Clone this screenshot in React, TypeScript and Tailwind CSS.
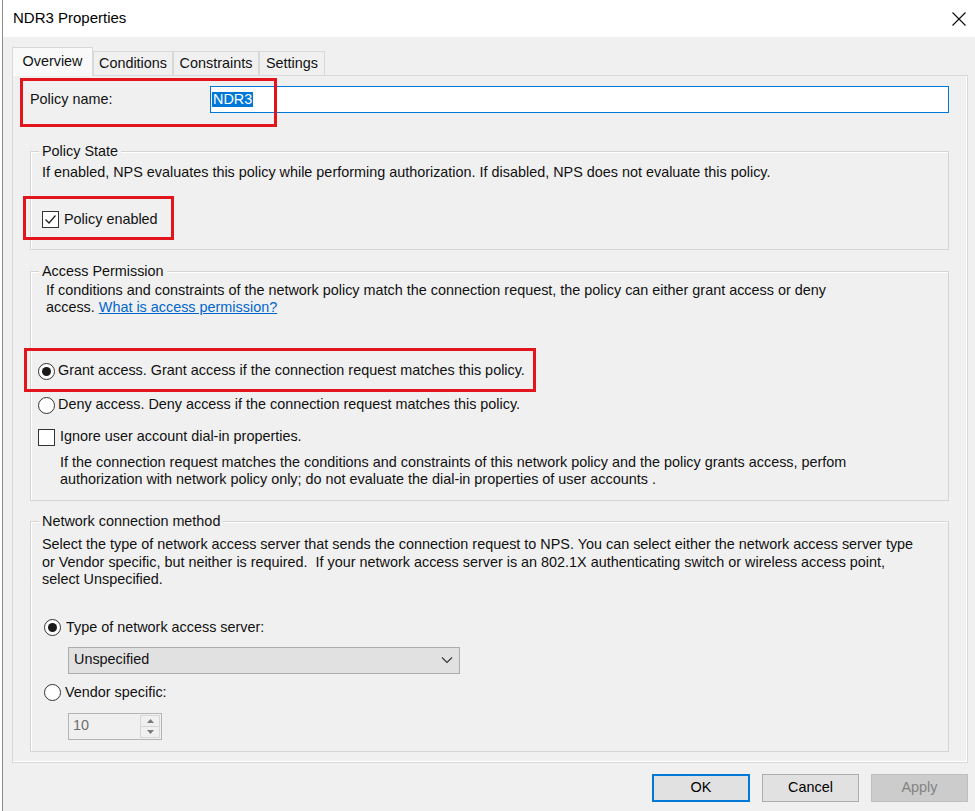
import { FC, ReactNode } from "react";

const font = { fontFamily: '"Liberation Sans", Arial, sans-serif' };

const Radio: FC<{ checked?: boolean }> = ({ checked }) => (
  <span className="w-[17px] h-[17px] shrink-0 rounded-full border border-[#333333] bg-white flex items-center justify-center">
    {checked && <span className="w-[9px] h-[9px] rounded-full bg-[#1a1a1a]" />}
  </span>
);

const Check: FC<{ checked?: boolean }> = ({ checked }) => (
  <span className="w-[17px] h-[17px] shrink-0 border border-[#333333] bg-white flex items-center justify-center">
    {checked && (
      <svg width="13" height="13" viewBox="0 0 13 13">
        <path d="M1.5 6.5 L5 10 L11.5 2.5" fill="none" stroke="#222" strokeWidth="1.3" />
      </svg>
    )}
  </span>
);

// group box: title sits on the top border, text starts at x 42
const Group: FC<{ title: string; className: string; children: ReactNode }> = ({ title, className, children }) => (
  <div className={"border border-[#d5d5d5] shadow-[inset_1px_1px_0_#ffffff] flex flex-col " + className}>
    <div className="-mt-[9px] ml-[8px] px-[3px] h-[17px] leading-[17px] w-fit bg-[#f0f0f0]">{title}</div>
    {children}
  </div>
);

const Tab: FC<{ label: string; active?: boolean; w: string }> = ({ label, active, w }) => (
  <div
    className={
      "flex items-center justify-center border border-b-0 border-[#d9d9d9] " +
      w +
      (active ? " h-[29px] -mb-px relative z-10 bg-[#f9f9f9]" : " h-[24px] bg-[#f0f0f0]")
    }
  >
    {label}
  </div>
);

const Button: FC<{ label: string; primary?: boolean; disabled?: boolean }> = ({ label, primary, disabled }) => (
  <div
    className={
      "h-[28px] flex items-center justify-center " +
      (primary
        ? "w-[98px] border-2 border-[#0078d7] bg-[#e1e1e1] text-black"
        : disabled
        ? "w-[97px] border border-[#bfbfbf] bg-[#cccccc] text-[#838383]"
        : "w-[97px] border border-[#adadad] bg-[#e1e1e1] text-black")
    }
  >
    {label}
  </div>
);

export default function App() {
  return (
    <div className="relative w-[975px] h-[811px] bg-white overflow-hidden text-[14.4px] text-[#111]" style={font}>
      <div className="ml-[2px] h-full border-l border-[#8c8c8c] flex flex-col bg-[#f0f0f0]">
        {/* title bar */}
        <div className="h-[37px] bg-white flex items-center justify-between pl-[10px] pr-[9px]">
          <span className="text-[15px] text-black">NDR3 Properties</span>
          <svg width="14" height="14" viewBox="0 0 14 14">
            <path d="M0.5 0.5 L13.5 13.5 M13.5 0.5 L0.5 13.5" stroke="#111" strokeWidth="1.2" />
          </svg>
        </div>

        <div className="pl-[9px] pr-[7px] pt-[10px] flex flex-col">
          {/* tabs */}
          <div className="flex items-end">
            <Tab label="Overview" active w="w-[81px]" />
            <Tab label="Conditions" w="w-[80px]" />
            <Tab label="Constraints" w="w-[86px]" />
            <Tab label="Settings" w="w-[66px]" />
          </div>

          {/* tab panel */}
          <div className="h-[688px] border border-[#d9d9d9] shadow-[inset_-1px_-1px_0_#ffffff] pl-[17px] pr-[18px] flex flex-col">
            <div className="mt-[10px] flex items-center h-[27px]">
              <span className="w-[180px] pt-px">Policy name:</span>
              <div className="flex-1 h-[27px] border-[1.5px] border-[#0078d7] bg-white flex items-center pl-px">
                <span className="bg-[#0078d7] text-white px-[1px] leading-[15px]">NDR3</span>
              </div>
            </div>

            <Group title="Policy State" className="mt-[38px] h-[99px]">
              <div className="pl-[11px] flex flex-col">
                <div className="mt-[4px] leading-[17px]">
                  If enabled, NPS evaluates this policy while performing authorization. If disabled, NPS does not evaluate this policy.
                </div>
                <div className="mt-[30px] flex items-center gap-[5px] h-[17px]">
                  <Check checked />
                  <span>Policy enabled</span>
                </div>
              </div>
            </Group>

            <Group title="Access Permission" className="mt-[21px] h-[230px]">
              <div className="pl-[7px] flex flex-col">
                <div className="mt-[2px] pl-[8px] leading-[17px]">
                  If conditions and constraints of the network policy match the connection request, the policy can either grant access or deny
                  <br />
                  access. <span className="text-[#0066cc] underline">What is access permission?</span>
                </div>
                <div className="mt-[46px] flex items-center gap-[3px] h-[18px]">
                  <Radio checked />
                  <span>Grant access. Grant access if the connection request matches this policy.</span>
                </div>
                <div className="mt-[16px] flex items-center gap-[3px] h-[18px]">
                  <Radio />
                  <span>Deny access. Deny access if the connection request matches this policy.</span>
                </div>
                <div className="mt-[14px] flex items-center gap-[5px] h-[18px]">
                  <Check />
                  <span>Ignore user account dial-in properties.</span>
                </div>
                <div className="mt-[8px] pl-[22px] leading-[17px]">
                  If the connection request matches the conditions and constraints of this network policy and the policy grants access, perfom
                  <br />
                  authorization with network policy only; do not evaluate the dial-in properties of user accounts .
                </div>
              </div>
            </Group>

            <Group title="Network connection method" className="mt-[20px] h-[231px]">
              <div className="pl-[11px] flex flex-col">
                <div className="mt-[6px] leading-[17.5px]">
                  Select the type of network access server that sends the connection request to NPS. You can select either the network access server type
                  <br />
                  or Vendor specific, but neither is required.&nbsp; If your network access server is an 802.1X authenticating switch or wireless access point,
                  <br />
                  select Unspecified.
                </div>
                <div className="mt-[30px] pl-[2px] flex items-center gap-[5px] h-[18px]">
                  <Radio checked />
                  <span>Type of network access server:</span>
                </div>
                <div className="mt-[10px] ml-[26px] w-[392px] h-[27px] border border-[#adadad] bg-[#e1e1e1] flex items-center justify-between pl-[5px] pr-[6px]">
                  <span>Unspecified</span>
                  <svg width="12" height="8" viewBox="0 0 12 8">
                    <path d="M1 1.5 L6 6.5 L11 1.5" fill="none" stroke="#333" strokeWidth="1.1" />
                  </svg>
                </div>
                <div className="mt-[10px] pl-[2px] flex items-center gap-[4px] h-[18px]">
                  <Radio />
                  <span>Vendor specific:</span>
                </div>
                <div className="mt-[11px] ml-[26px] w-[94px] h-[27px] border border-[#b4b4b4] bg-[#f0f0f0] flex items-center">
                  <span className="flex-1 pl-[4px] text-[#6d6d6d]">10</span>
                  <div className="w-[20px] h-[23px] mr-px border border-[#d6d6d6] bg-[#f0f0f0] flex flex-col">
                    <div className="flex-1 flex items-center justify-center border-b border-[#d6d6d6]">
                      <svg width="7" height="4" viewBox="0 0 7 4"><path d="M0 4 L3.5 0 L7 4 Z" fill="#7a7a7a" /></svg>
                    </div>
                    <div className="flex-1 flex items-center justify-center">
                      <svg width="7" height="4" viewBox="0 0 7 4"><path d="M0 0 L3.5 4 L7 0 Z" fill="#7a7a7a" /></svg>
                    </div>
                  </div>
                </div>
              </div>
            </Group>
          </div>

          {/* buttons */}
          <div className="mt-[11px] flex justify-end gap-[12px]">
            <Button label="OK" primary />
            <Button label="Cancel" />
            <Button label="Apply" disabled />
          </div>
        </div>
      </div>

      {/* annotation boxes */}
      <div className="absolute left-[20px] top-[78px] w-[257px] h-[49px] border-[3px] border-[#e3151c]" />
      <div className="absolute left-[23px] top-[196px] w-[151px] h-[44px] border-[3px] border-[#e3151c]" />
      <div className="absolute left-[24px] top-[348px] w-[512px] h-[44px] border-[3px] border-[#e3151c]" />
    </div>
  );
}
